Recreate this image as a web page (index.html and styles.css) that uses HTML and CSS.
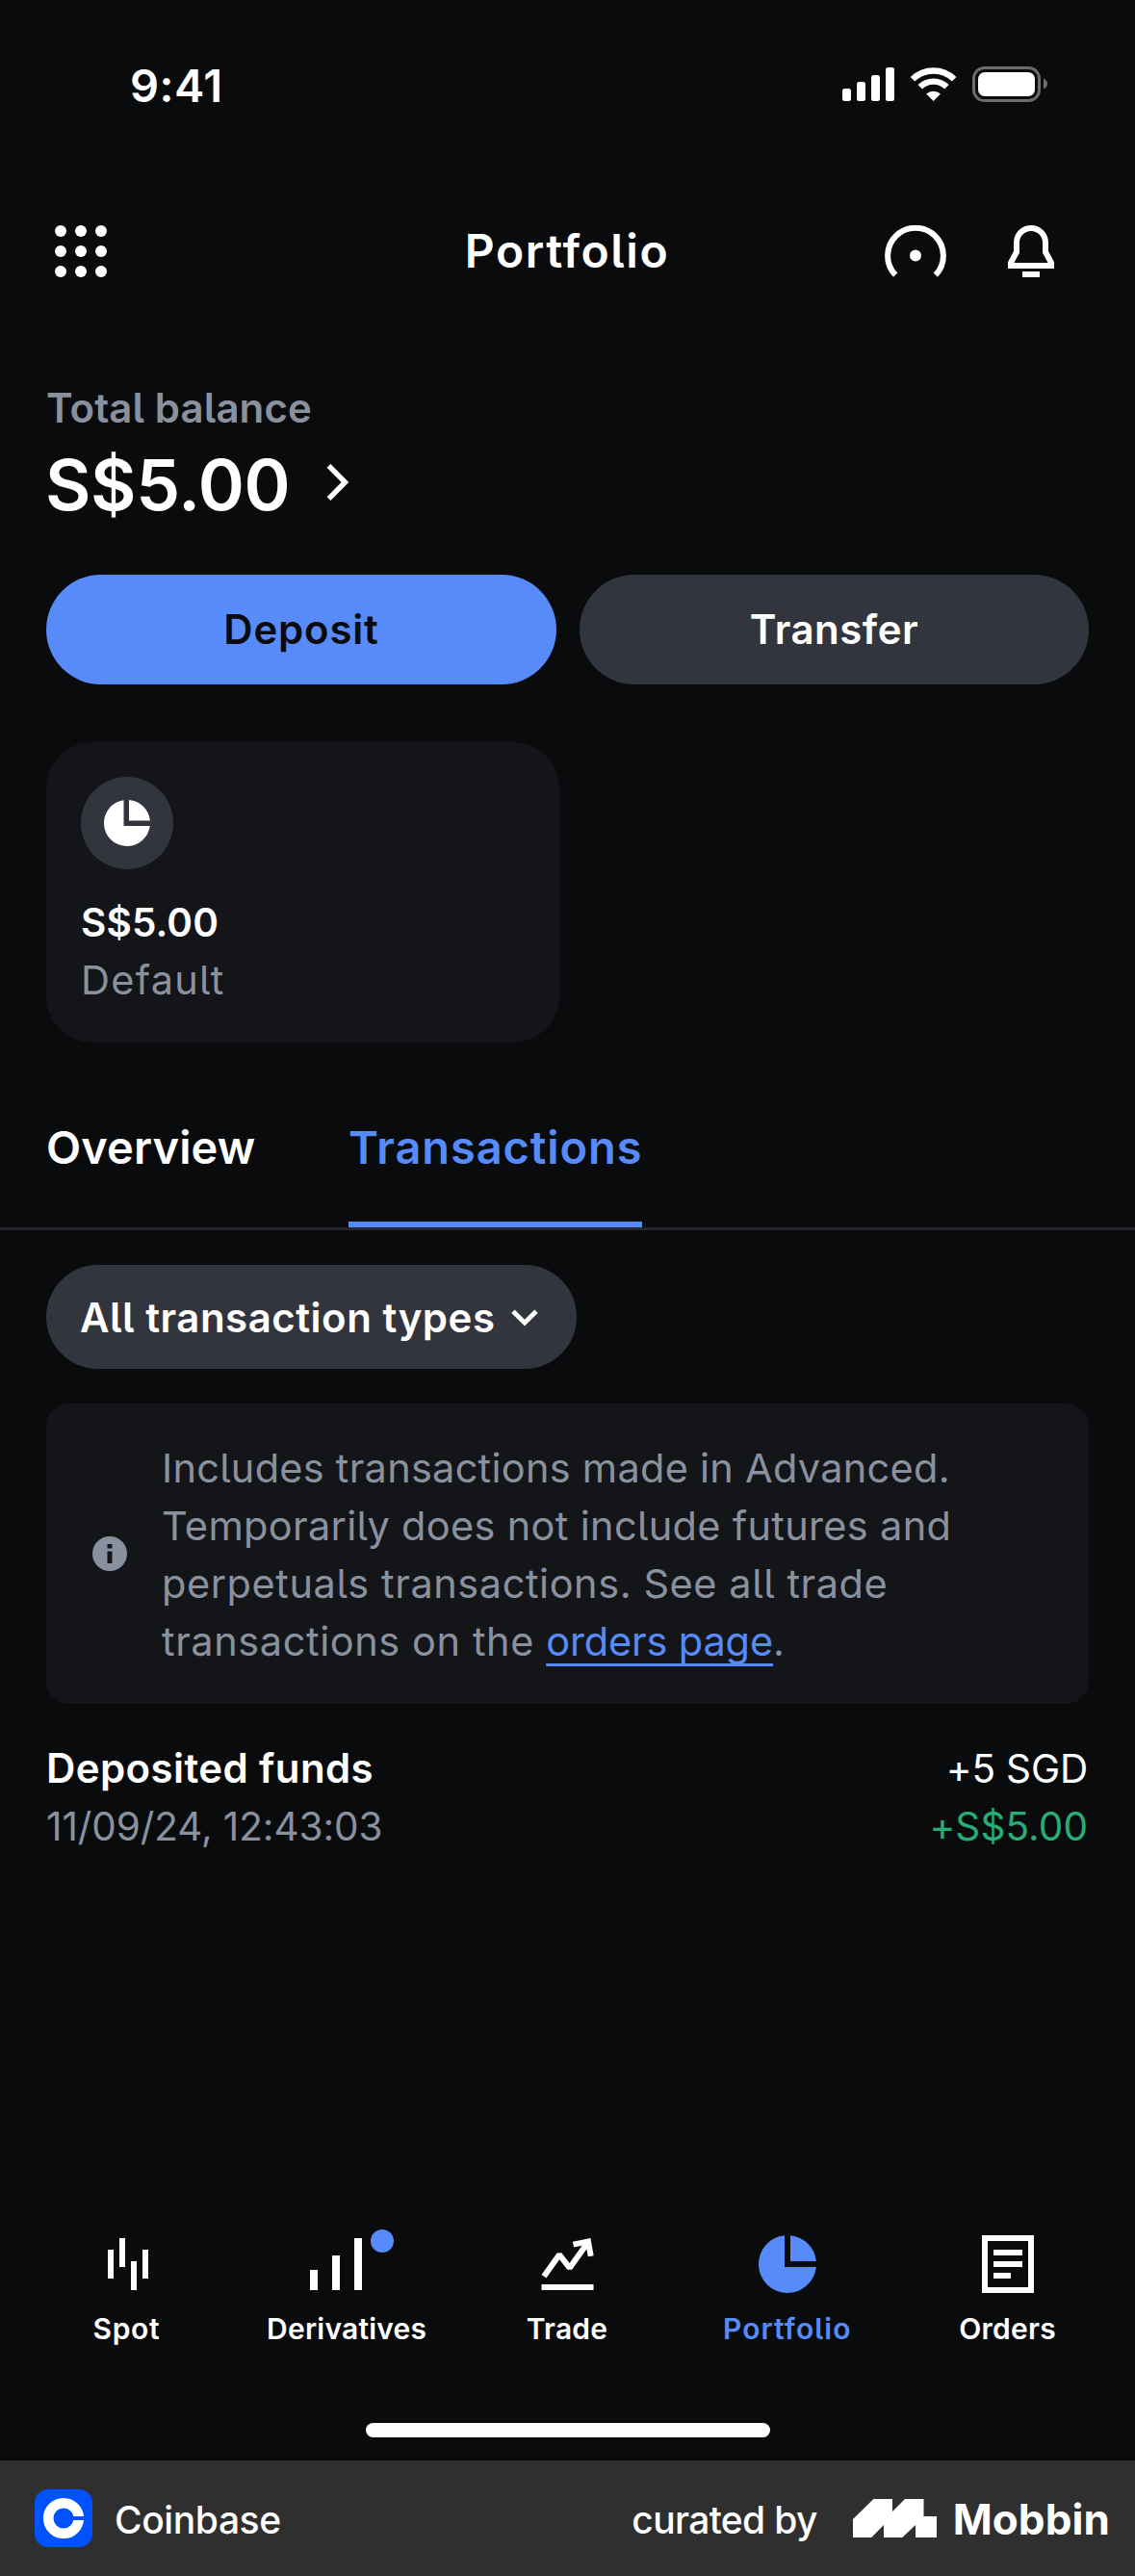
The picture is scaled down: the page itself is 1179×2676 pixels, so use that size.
FILE: index.html
```html
<!DOCTYPE html>
<html lang="en">
<head>
<meta charset="utf-8">
<title>Portfolio</title>
<link rel="stylesheet" href="styles.css">
</head>
<body>
<div class="app">
  <div class="status">
    <span class="time">9:41</span>
    <svg class="status-icons" width="216" height="40" viewBox="0 0 216 40" fill="#fff">
      <rect x="0" y="24" width="9" height="13" rx="2.5"/>
      <rect x="15" y="17" width="9" height="20" rx="2.5"/>
      <rect x="30" y="10" width="9" height="27" rx="2.5"/>
      <rect x="45" y="2" width="9" height="35" rx="2.5"/>
      <g fill="none" stroke="#fff" stroke-width="6.4">
        <path d="M73 14.2a31 31 0 0 1 43.200 0"/>
        <path d="M80.800 22.200a19.800 19.800 0 0 1 27.600 0"/>
      </g>
      <path d="M94.600 37l-7.400-7.400a11 11 0 0 1 14.800 0z"/>
      <rect x="136.500" y="2.500" width="68" height="34" rx="11" fill="none" stroke="#6b6c6d" stroke-width="3"/>
      <rect x="141" y="7" width="59" height="25" rx="7"/>
      <path d="M209 13.500q4 1.500 4 5.500t-4 5.500z" fill="#6b6c6d"/>
    </svg>
  </div>

  <header class="header">
    <svg width="56" height="56" viewBox="0 0 56 56" fill="#fff">
      <circle cx="7" cy="7" r="6"/><circle cx="28" cy="7" r="6"/><circle cx="49" cy="7" r="6"/>
      <circle cx="7" cy="28" r="6"/><circle cx="28" cy="28" r="6"/><circle cx="49" cy="28" r="6"/>
      <circle cx="7" cy="49" r="6"/><circle cx="28" cy="49" r="6"/><circle cx="49" cy="49" r="6"/>
    </svg>
    <h1 class="title">Portfolio</h1>
    <div class="actions">
      <svg width="64" height="54" viewBox="0 0 64 54" fill="none">
        <path d="M11.200 51.700a28.900 28.900 0 1 1 41.600 0" stroke="#fff" stroke-width="6"/>
        <circle cx="32" cy="31.600" r="6" fill="#fff"/>
      </svg>
      <svg width="48" height="54" viewBox="0 0 48 54">
        <path d="M9 18a15 15 0 0 1 30 0v9.700l6 11.300v3h-42v-3l6-11.300z" fill="none" stroke="#fff" stroke-width="6"/>
        <rect x="15" y="48" width="18" height="6" fill="#fff"/>
      </svg>
    </div>
  </header>

  <section class="balance">
    <div class="balance-label">Total balance</div>
    <div class="balance-row">
      <span class="balance-amount">S$5.00</span>
      <svg width="25" height="40" viewBox="0 0 25 40" fill="none" stroke="#fff" stroke-width="5.400"><path d="M2.500 2.900L19.500 20 2.500 37.100"/></svg>
    </div>
  </section>

  <div class="buttons">
    <div class="btn btn-primary">Deposit</div>
    <div class="btn btn-secondary">Transfer</div>
  </div>

  <section class="card">
    <div class="card-icon">
      <svg width="48" height="48" viewBox="0 0 48 48" fill="#fff">
        <path d="M20.500 0.250A24 24 0 1 0 47.750 27H20.500z"/>
        <path d="M26 0.100A24 24 0 0 1 47.900 21.500H26z"/>
      </svg>
    </div>
    <div class="card-amount">S$5.00</div>
    <div class="card-name">Default</div>
  </section>

  <nav class="tabs">
    <div class="tab tab-overview">Overview</div>
    <div class="tab tab-active">Transactions</div>
  </nav>

  <div class="filter">
    <span>All transaction types</span>
    <svg width="28" height="18" viewBox="0 0 28 18" fill="none" stroke="#fff" stroke-width="4.800"><path d="M2 2.300l12 11.900 12-11.900"/></svg>
  </div>

  <section class="notice">
    <svg class="notice-icon" width="36" height="36" viewBox="0 0 36 36">
      <circle cx="18" cy="18" r="18" fill="#8a919e"/>
      <path d="M15.500 8h5v4.500h-5zM15.500 15.500h5v12.500h-5z" fill="#141519"/>
    </svg>
    <p class="notice-text">
      <span class="line l1">Includes transactions made in Advanced.</span>
      <span class="line l2">Temporarily does not include futures and</span>
      <span class="line l3">perpetuals transactions. See all trade</span>
      <span class="line l4">transactions on the <a class="link">orders page</a>.</span>
    </p>
  </section>

  <section class="tx">
    <div>
      <div class="tx-title">Deposited funds</div>
      <div class="tx-date">11/09/24, 12:43:03</div>
    </div>
    <div class="tx-right">
      <div class="tx-amount">+5 SGD</div>
      <div class="tx-value">+S$5.00</div>
    </div>
  </section>

  <nav class="bottom-nav">
    <div class="nav-item">
      <svg width="100" height="72" viewBox="0 0 100 72" fill="#fff">
        <rect x="30" y="27" width="6" height="30"/><rect x="42" y="15" width="6" height="30"/><rect x="54" y="39" width="6" height="30"/><rect x="66" y="27" width="6" height="30"/>
      </svg>
      <span class="n1">Spot</span>
    </div>
    <div class="nav-item">
      <svg width="100" height="72" viewBox="0 0 100 72" fill="#fff">
        <rect x="11" y="48" width="8" height="21"/><rect x="34" y="33" width="8" height="36"/><rect x="57" y="15" width="8" height="54"/>
        <circle cx="86" cy="18" r="12" fill="#578bfa"/>
      </svg>
      <span class="n2">Derivatives</span>
    </div>
    <div class="nav-item">
      <svg width="100" height="72" viewBox="0 0 100 72" fill="none" stroke="#fff" stroke-width="6">
        <path d="M26 54.800L42 32.200 52.700 46 72 19" stroke-linejoin="bevel"/>
        <path d="M56.500 21.600L72 18.600 74.700 33.800"/>
        <path d="M23.500 66h54"/>
      </svg>
      <span class="n3">Trade</span>
    </div>
    <div class="nav-item nav-active">
      <svg width="100" height="72" viewBox="0 0 100 72" fill="#578bfa">
        <path d="M47 12.150A30 30 0 1 0 79.850 45H47z"/>
        <path d="M53 12.150A30 30 0 0 1 79.850 39H53z"/>
      </svg>
      <span class="n4">Portfolio</span>
    </div>
    <div class="nav-item">
      <svg width="100" height="72" viewBox="0 0 100 72" fill="none" stroke="#fff" stroke-width="6">
        <rect x="26" y="15" width="48" height="54"/>
        <path d="M35 30h30M35 42h30M35 54h18"/>
      </svg>
      <span class="n5">Orders</span>
    </div>
  </nav>
  <div class="home"></div>
</div>

<footer class="footer">
  <div class="brand">
    <svg width="60" height="60" viewBox="0 0 60 60">
      <rect width="60" height="60" rx="14" fill="#0052ff"/>
      <circle cx="30" cy="30" r="15.800" fill="none" stroke="#fff" stroke-width="10.600"/>
      <rect x="40" y="28" width="13" height="4" fill="#0052ff"/>
    </svg>
    <span class="brand-name">Coinbase</span>
  </div>
  <div class="credit">
    <span class="credit-by">curated by</span>
    <svg width="87" height="40" viewBox="0 0 87 40" fill="#fff">
      <path d="M0 21L21.400 0H41v13L54 0h19.500v18H87v22H65V27L51.300 40H32V27L19.200 40H0z"/>
    </svg>
    <span class="credit-name">Mobbin</span>
  </div>
</footer>
</body>
</html>
```
FILE: styles.css
```css
* { box-sizing: border-box; }
body {
  margin: 0;
  width: 1179px;
  background: #0a0b0d;
  color: #fff;
  font-family: Inter, "Liberation Sans", sans-serif;
  font-feature-settings: "cv05";
  white-space: nowrap;
}
svg { display: block; flex: none; }

.app { height: 2556px; display: flex; flex-direction: column; }

.status {
  height: 176px;
  flex: none;
  display: flex;
  align-items: center;
  justify-content: space-between;
  padding: 0 88px 0 135px;
}
.time { font-size: 47px; font-weight: 600; letter-spacing: 0.5px; }

.header {
  height: 170px;
  flex: none;
  display: grid;
  grid-template-columns: 1fr auto 1fr;
  align-items: center;
  padding: 0 84px 0 56px;
}
.title { margin: 0 0 0 27px; font-size: 48px; font-weight: 600; letter-spacing: 1.6px; line-height: 60px; }
.actions { display: flex; justify-content: flex-end; gap: 64px; }

.balance { padding: 48px 48px 0; }
.balance-label { font-size: 42px; font-weight: 600; letter-spacing: 0.1px; line-height: 60px; color: #8a919e; }
.balance-row { display: flex; align-items: center; gap: 38px; height: 98px; }
.balance-row svg { margin-bottom: 4px; }
.balance-amount { font-size: 73px; font-weight: 600; letter-spacing: -0.38px; line-height: 98px; margin-left: -1px; padding-top: 2px; }

.buttons { display: grid; grid-template-columns: 530px 529px; gap: 24px; margin: 45px 48px 0; }
.btn { height: 114px; border-radius: 57px; text-align: center; font-size: 42px; font-weight: 600; line-height: 114px; }
.btn-primary { background: #578bfa; color: #0a0b0d; letter-spacing: 0.8px; }
.btn-secondary { background: #32353d; letter-spacing: 0.5px; }

.card { width: 533px; height: 312px; flex: none; margin: 60px 48px 0; padding: 36px; border-radius: 48px; background: #141519; }
.card-icon { display: flex; align-items: center; justify-content: center; width: 96px; height: 96px; margin-bottom: 26px; border-radius: 50%; background: #32353d; }
.card-amount { font-size: 40.5px; font-weight: 600; letter-spacing: 0.1px; line-height: 60px; }
.card-name { font-size: 41.5px; letter-spacing: 1.27px; line-height: 59px; color: #8a919e; }

.tabs { display: flex; gap: 96px; padding: 79px 48px 0; border-bottom: 3px solid #25272c; }
.tab { height: 113px; font-size: 47px; font-weight: 600; line-height: 60px; }
.tab-overview { width: 218px; letter-spacing: 0.12px; }
.tab-active { width: 305px; color: #578bfa; border-bottom: 6px solid #578bfa; letter-spacing: 0.9px; }

.filter {
  align-self: flex-start;
  display: flex;
  align-items: center;
  justify-content: space-between;
  width: 551px;
  height: 108px;
  margin: 36px 0 0 48px;
  padding: 1px 40px 0 35px;
  border-radius: 54px;
  background: #32353d;
  font-size: 42px;
  font-weight: 600;
  letter-spacing: 0.5px;
}

.notice { display: flex; align-items: center; gap: 36px; height: 312px; flex: none; margin: 36px 48px 0; padding-left: 48px; border-radius: 24px; background: #141519; }
.notice-text { margin: 1px 0 0; font-size: 41.5px; line-height: 60px; color: #8a919e; }
.line { display: block; }
.l1 { letter-spacing: 0.26px; }
.l2 { letter-spacing: 0.32px; }
.l3 { letter-spacing: 0.56px; }
.l4 { letter-spacing: 0.58px; }
.link {
  color: #578bfa;
  letter-spacing: -0.15px;
  text-decoration: underline;
  text-decoration-thickness: 3px;
  text-decoration-skip-ink: none;
  text-underline-offset: 8px;
}

.tx { display: flex; justify-content: space-between; padding: 37px 48px 0; font-size: 40.5px; line-height: 60px; }
.tx-title { font-size: 42px; font-weight: 600; letter-spacing: 0.4px; }
.tx-date { color: #8a919e; letter-spacing: -0.09px; }
.tx-right { padding-right: 1px; text-align: right; }
.tx-amount { letter-spacing: -0.18px; }
.tx-value { letter-spacing: 0.07px; color: #27ad75; }
.tx-date, .tx-right { position: relative; top: 1px; }

.bottom-nav { display: grid; grid-template-columns: repeat(5, 1fr); margin-top: auto; padding: 0 18px 0 17px; }
.nav-item { display: flex; flex-direction: column; align-items: center; gap: 19px; font-size: 30px; font-weight: 600; line-height: 37px; }
.nav-item:nth-child(-n+2) svg { margin-left: 1px; }
.nav-active { color: #578bfa; }
.n1 { letter-spacing: 0.63px; }
.n2 { letter-spacing: 0.22px; }
.n3 { letter-spacing: 0.22px; }
.n4 { letter-spacing: 1.1px; }
.n5 { letter-spacing: 0.23px; }

.home { align-self: center; flex: none; width: 420px; height: 15px; margin: 79px 0 24px; border-radius: 8px; background: #fff; }

.footer { height: 120px; display: flex; align-items: center; justify-content: space-between; padding: 0 26px 0 36px; background: #2f2f2f; }
.brand, .credit { display: flex; align-items: center; }
.brand-name { margin: 2px 0 0 23px; font-size: 39px; font-weight: 500; letter-spacing: -0.41px; }
.credit-by { margin: 2px 37px 0 0; font-size: 39px; font-weight: 500; letter-spacing: -0.68px; }
.credit-name { margin: 1px 0 0 17px; font-size: 44px; font-weight: 700; letter-spacing: 0.09px; }
```
